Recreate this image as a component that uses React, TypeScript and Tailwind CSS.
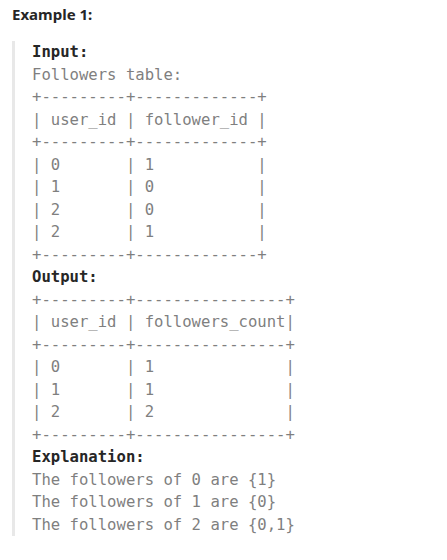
const lines: { text: string; bold?: boolean }[] = [
  { text: 'Input:', bold: true },
  { text: 'Followers table:' },
  { text: '+---------+-------------+' },
  { text: '| user_id | follower_id |' },
  { text: '+---------+-------------+' },
  { text: '| 0       | 1           |' },
  { text: '| 1       | 0           |' },
  { text: '| 2       | 0           |' },
  { text: '| 2       | 1           |' },
  { text: '+---------+-------------+' },
  { text: 'Output:', bold: true },
  { text: '+---------+----------------+' },
  { text: '| user_id | followers_count|' },
  { text: '+---------+----------------+' },
  { text: '| 0       | 1              |' },
  { text: '| 1       | 1              |' },
  { text: '| 2       | 2              |' },
  { text: '+---------+----------------+' },
  { text: 'Explanation:', bold: true },
  { text: 'The followers of 0 are {1}' },
  { text: 'The followers of 1 are {0}' },
  { text: 'The followers of 2 are {0,1}' },
]

export default function App() {
  return (
    <div className="w-[447px] h-[560px] bg-white overflow-hidden">
      <div className="pl-3 pt-[3px] text-[15px] leading-[22px] font-bold text-[#262626] font-['Noto_Sans',sans-serif]">
        Example 1:
      </div>
      <pre className="mt-4 ml-3 border-l-[3px] border-[#e8e8e8] pl-[17px] text-[15.6px] leading-[22.5px] text-[#7f7f7f] font-['DejaVu_Sans_Mono',monospace]">
        {lines.map((l, i) => (
          <div key={i} className={l.bold ? 'font-bold text-[#262626]' : ''}>
            {l.text}
          </div>
        ))}
      </pre>
    </div>
  )
}
